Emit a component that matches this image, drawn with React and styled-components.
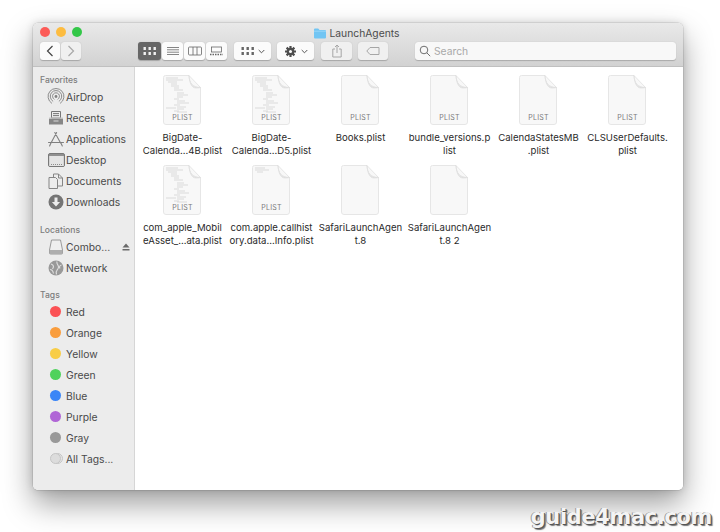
import React from 'react'
import styled, { createGlobalStyle } from 'styled-components'

const Global = createGlobalStyle`
  html, body { margin: 0; padding: 0; background: #ffffff; }
  body { width: 720px; height: 532px; overflow: hidden; font-family: "Inter", "Liberation Sans", sans-serif; }
`

const Page = styled.div`
  position: relative;
  width: 720px;
  height: 532px;
  padding: 23px 37px 0 33px;
  box-sizing: border-box;
  overflow: hidden;
`

const Window = styled.div`
  height: 467px;
  border-radius: 5px;
  overflow: hidden;
  display: flex;
  flex-direction: column;
  background: #fff;
  box-shadow: 0 14px 30px rgba(0,0,0,.38), 0 0 8px rgba(0,0,0,.14), 0 0 0 .5px rgba(0,0,0,.16);
`

const TitleBar = styled.div`
  height: 44px;
  flex: none;
  box-sizing: border-box;
  padding: 1px 7px 0;
  background: linear-gradient(#e9e9e9, #d2d2d2);
  border-bottom: 1px solid #c0c0c0;
  display: flex;
  flex-direction: column;
`

const TopRow = styled.div`
  position: relative;
  height: 17px;
  display: flex;
  align-items: center;
  justify-content: center;
  gap: 3px;
  font-size: 10.3px;
  color: #4c4c4c;
  padding-right: 4px;
`

const Lights = styled.div`
  position: absolute;
  left: 0;
  top: 3px;
  display: flex;
  gap: 6px;
`

const Light = styled.span`
  width: 10px;
  height: 10px;
  border-radius: 50%;
  background: ${p => p.$c};
`

const ToolRow = styled.div`
  display: flex;
  align-items: center;
  height: 18px;
  margin-top: 1px;
`

const Group = styled.div`
  display: flex;
  gap: 1px;
  margin-left: ${p => p.$ml || 0}px;
`

const Btn = styled.div`
  width: ${p => p.$w || 23}px;
  height: 18px;
  display: flex;
  align-items: center;
  justify-content: center;
  gap: 4px;
  border-radius: 3px;
  background: ${p => p.$active ? '#676767' : p.$dim ? '#f0f0f0' : '#fbfbfb'};
  box-shadow: 0 .5px 1px rgba(0,0,0,.22);
`

const SearchBox = styled.div`
  width: 261px;
  height: 18px;
  margin-left: 27px;
  border-radius: 3px;
  background: #f8f8f8;
  box-shadow: 0 .5px 1px rgba(0,0,0,.2);
  display: flex;
  align-items: center;
  gap: 3px;
  padding-left: 4px;
  box-sizing: border-box;
  font-size: 10.3px;
  color: #a9a9a9;
`

const Body = styled.div`
  flex: 1;
  display: flex;
  min-height: 0;
`

const Sidebar = styled.div`
  width: 102px;
  flex: none;
  box-sizing: border-box;
  background: #ececec;
  border-right: 1px solid #d6d6d6;
  padding-top: 7px;
`

const Heading = styled.div`
  height: 12px;
  line-height: 12px;
  font-size: 8.6px;
  font-weight: 500;
  color: #7d7d7d;
  padding-left: 7px;
  margin-top: ${p => p.$mt || 0}px;
`

const Item = styled.div`
  height: 21px;
  display: flex;
  align-items: center;
  font-size: 10.3px;
  color: #4a4a4a;
  white-space: nowrap;
`

const IconSlot = styled.span`
  width: 18px;
  height: 18px;
  margin-left: 14px;
  margin-right: 1px;
  display: flex;
  align-items: center;
  justify-content: center;
  flex: none;
`

const Dot = styled.span`
  width: 11px;
  height: 11px;
  margin-left: -2px;
  border-radius: 50%;
  background: ${p => p.$c};
`

const Eject = styled.span`
  margin-left: 12px;
  display: flex;
`

const Files = styled.div`
  flex: 1;
  display: grid;
  grid-template-columns: repeat(6, 89px);
  grid-auto-rows: 90px;
  padding: 8px 0 0 3px;
  background: #fff;
`

const FileCell = styled.div`
  display: flex;
  flex-direction: column;
  align-items: center;
`

const FileIcon = styled.div`
  position: relative;
  width: 38px;
  height: 50px;
  margin-left: -1px;
`

const IconLabel = styled.span`
  position: absolute;
  left: 1px;
  right: 0;
  bottom: 3px;
  text-align: center;
  font-size: 7px;
  letter-spacing: .2px;
  color: #7a7a7a;
`

const FileName = styled.div`
  width: 87px;
  margin-top: 6px;
  font-size: 9.6px;
  line-height: 13px;
  text-align: center;
  color: #2a2a2a;
  white-space: pre;
`

const Watermark = styled.div`
  position: absolute;
  right: 8px;
  bottom: 0;
  font-family: "DejaVu Sans", sans-serif;
  font-weight: 700;
  font-size: 20.8px;
  line-height: 30px;
  letter-spacing: -.25px;
  color: #f4f4f4;
  text-shadow: 1px 1px 0 #555, 2px 2px 1px #777, -1px 0 0 #999;
`

const Sv = ({ w = 16, h = 16, children }) => (
  <svg width={w} height={h} viewBox={`0 0 ${w} ${h}`} fill="none">{children}</svg>
)

const Folder = () => (
  <Sv w={14} h={12}>
    <path d="M1 2.500A1 1 0 0 1 2 1.500h3.200l1.300 1.500H12a1 1 0 0 1 1 1v6.500a1 1 0 0 1-1 1H2a1 1 0 0 1-1-1z" fill="#71c5f3" />
    <path d="M1 4.200h12" stroke="#a4dcf9" strokeWidth=".8" />
  </Sv>
)

const IconGridGlyph = ({ c = '#666' }) => (
  <Sv w={13} h={10}>
    {[0, 5, 10].map(x => [1, 6].map(y => (
      <rect key={`${x}-${y}`} x={x + .5} y={y} width="2.400" height="3" fill={c} />
    )))}
  </Sv>
)

const ListGlyph = () => (
  <Sv w={12} h={10}>
    <path d="M0 1.500h12M0 3.800h12M0 6.200h12M0 8.500h12" stroke="#666" strokeWidth=".8" />
  </Sv>
)

const ColumnGlyph = () => (
  <Sv w={14} h={10}>
    <rect x=".5" y="1" width="13" height="8" rx="1" stroke="#666" strokeWidth=".8" />
    <path d="M5 1v8M9 1v8" stroke="#666" strokeWidth=".8" />
  </Sv>
)

const GalleryGlyph = () => (
  <Sv w={13} h={10}>
    <rect x="1.500" y="1" width="10" height="5" stroke="#666" strokeWidth=".8" />
    <path d="M0 8.500h13" stroke="#666" strokeDasharray="1.500 1" strokeWidth="1.300" />
  </Sv>
)

const Chevron = () => (
  <Sv w={7} h={5}>
    <path d="M.7 1 3.500 3.800 6.300 1" stroke="#555" strokeWidth="1" />
  </Sv>
)

const GearGlyph = () => (
  <Sv w={13} h={13}>
    <g stroke="#4d4d4d" strokeWidth="2.200">
      <path d="M6.500 1v11M1 6.500h11M2.600 2.600l7.800 7.800M10.400 2.600l-7.800 7.800" />
    </g>
    <circle cx="6.500" cy="6.500" r="3.800" fill="#4d4d4d" />
    <circle cx="6.500" cy="6.500" r="1.500" fill="#fbfbfb" />
  </Sv>
)

const ShareGlyph = () => (
  <Sv w={10} h={14}>
    <path d="M3 5H.8v8h8.400V5H7" stroke="#a6a6a6" />
    <path d="M5 9V1M3 3 5 1l2 2" stroke="#a6a6a6" />
  </Sv>
)

const TagGlyph = () => (
  <Sv w={14} h={8}>
    <path d="M4 .5h9v7H4L.8 4z" stroke="#a6a6a6" />
  </Sv>
)

const SearchGlyph = () => (
  <Sv w={12} h={12}>
    <circle cx="5" cy="5" r="3.800" stroke="#6f6f6f" />
    <path d="m7.800 7.800 3.400 3.400" stroke="#6f6f6f" />
  </Sv>
)

const AirDropIcon = () => (
  <Sv w={18} h={18}>
    <g stroke="#808080" strokeWidth=".9" strokeLinecap="round">
      <path d="M4.600 15.200a8 8 0 1 1 8.800 0" />
      <path d="M5.800 13.200a5.800 5.800 0 1 1 6.400 0" />
      <path d="M7 11.200a3.500 3.500 0 1 1 4 0" />
    </g>
    <circle cx="9" cy="8.500" r="1.400" fill="#808080" />
  </Sv>
)

const RecentsIcon = () => (
  <Sv w={16} h={16}>
    <path d="M3.500 1.500h9V8h-9z" stroke="#777" />
    <path d="M5 3.600h6M5 5.600h6" stroke="#777" />
    <path d="M1 8.500h14v6H1z" fill="#868686" />
    <path d="M1 8h14" stroke="#c9c9c9" />
    <path d="M5.500 11h5" stroke="#d8d8d8" />
  </Sv>
)

const AppsIcon = () => (
  <Sv w={18} h={16}>
    <path d="M9.600 1.500 4 12M7.800 1.500 13.600 12M1.500 11.500h15M3.800 12.200 2.600 15M14 12.200l1.300 2.800" stroke="#808080" strokeWidth="1.100" strokeLinecap="round" />
  </Sv>
)

const DesktopIcon = () => (
  <Sv w={17} h={14}>
    <rect x=".5" y=".5" width="16" height="13" rx="1.500" fill="#909090" stroke="#787878" />
    <rect x="1.200" y="3" width="14.600" height="10" fill="#e4e4e4" />
    <path d="M3 11.500h11" stroke="#8c8c8c" strokeDasharray="1 1" />
  </Sv>
)

const DocumentsIcon = () => (
  <Sv w={16} h={16}>
    <path d="M5.500 1h5l4 4v8h-9z" fill="#ececec" stroke="#858585" />
    <path d="M10.500 1v4h4" stroke="#858585" />
    <path d="M1 4.500h6.500l2 2v9H1z" fill="#ececec" stroke="#858585" />
  </Sv>
)

const DownloadsIcon = () => (
  <Sv w={16} h={16}>
    <circle cx="8" cy="8" r="7.500" fill="#757575" />
    <path d="M6.500 3.500h3v4.500h2.600L8 12.400 3.900 8h2.600z" fill="#ececec" />
  </Sv>
)

const DriveIcon = () => (
  <Sv w={14} h={16}>
    <path d="M2.500 1h9l2 10v3a1 1 0 0 1-1 1h-11a1 1 0 0 1-1-1v-3z" fill="#efefef" stroke="#9a9a9a" />
    <path d="M.6 11h12.800v3.200a.8.8 0 0 1-.8.8H1.400a.8.8 0 0 1-.8-.8z" fill="#aeaeae" />
  </Sv>
)

const NetworkIcon = () => (
  <Sv w={16} h={16}>
    <circle cx="8" cy="8" r="7.500" fill="#999" />
    <path d="M3 4c3 1 3 3 1.500 5M9 1.500c-1 3 2 3 1.500 6S7 10 8.500 14.500M13.500 5c-2 .5-2.500 2-1.500 3.500M2 9.500c2 0 3 1.500 3.500 4" stroke="#dcdcdc" strokeWidth="1.200" />
  </Sv>
)

const AllTagsIcon = () => (
  <Sv w={13} h={11}>
    <circle cx="7.500" cy="5.500" r="5" fill="#e6e6e6" stroke="#c4c4c4" />
    <circle cx="5.500" cy="5.500" r="5" fill="#dcdcdc" stroke="#c4c4c4" />
  </Sv>
)

const EjectIcon = () => (
  <Sv w={8} h={8}>
    <path d="M4 .5 7.500 4.500h-7zM.5 6h7v1.500h-7z" fill="#6a6a6a" />
  </Sv>
)

// tiny grey scribble lines of a plist preview, [x, y, width]
const denseLines = [
  [3, 3, 12], [3, 5, 17], [5, 7, 9], [8, 9, 6], [8, 11, 8], [11, 13, 5], [11, 15, 9], [14, 18, 7], [14, 20, 11],
  [14, 22, 6], [11, 24, 5], [14, 26, 8], [14, 28, 12], [11, 30, 6], [14, 32, 9], [3, 33, 10], [14, 34, 7], [11, 36, 5], [14, 37, 10]
]
const sparseLines = [[3, 3, 10], [3, 5, 14], [5, 7, 6]]

const PageIcon = ({ lines, label }) => (
  <FileIcon>
    <svg width="38" height="50" viewBox="0 0 38 50" fill="none">
      <path d="M2.500 .5H26L37.500 12.500V47a2.500 2.500 0 0 1-2.500 2.500H3a2.500 2.500 0 0 1-2.500-2.500V2.500a2 2 0 0 1 2-2z" fill="#f8f8f8" stroke="#e6e6e6" />
      <path d="M26 .5C26.500 8 29 12 37.500 12.500C31 14 27 13 26 .5z" fill="#e6e6e6" stroke="#dcdcdc" strokeWidth=".6" />
      {lines && lines.map(([x, y, w]) => (
        <path key={`${x}-${y}`} d={`M${x} ${y}h${w}`} stroke="#c6c6c6" strokeWidth=".6" />
      ))}
    </svg>
    {label && <IconLabel>PLIST</IconLabel>}
  </FileIcon>
)

const files = [
  { name: 'BigDate-\nCalenda...4B.plist', lines: denseLines, label: true },
  { name: 'BigDate-\nCalenda...D5.plist', lines: denseLines, label: true },
  { name: 'Books.plist', lines: null, label: true },
  { name: 'bundle_versions.p\nlist', lines: null, label: true },
  { name: 'CalendaStatesMB\n.plist', lines: null, label: true },
  { name: 'CLSUserDefaults.\nplist', lines: null, label: true },
  { name: 'com_apple_Mobil\neAsset_...ata.plist', lines: denseLines, label: true },
  { name: 'com.apple.callhist\nory.data...Info.plist', lines: sparseLines, label: true },
  { name: 'SafariLaunchAgen\nt.8', lines: null, label: false },
  { name: 'SafariLaunchAgen\nt.8 2', lines: null, label: false }
]

const favorites = [
  ['AirDrop', <AirDropIcon />],
  ['Recents', <RecentsIcon />],
  ['Applications', <AppsIcon />],
  ['Desktop', <DesktopIcon />],
  ['Documents', <DocumentsIcon />],
  ['Downloads', <DownloadsIcon />]
]

const tags = [
  ['Red', '#fb5255'],
  ['Orange', '#f99d3d'],
  ['Yellow', '#f8cd47'],
  ['Green', '#4fd25c'],
  ['Blue', '#3b86f7'],
  ['Purple', '#b066d6'],
  ['Gray', '#999999']
]

export default function App() {
  return (
    <>
      <Global />
      <Page>
        <Window>
          <TitleBar>
            <TopRow>
              <Lights>
                <Light $c="#fc5b57" />
                <Light $c="#fdbc40" />
                <Light $c="#33c748" />
              </Lights>
              <Folder />
              LaunchAgents
            </TopRow>
            <ToolRow>
              <Group>
                <Btn $w={20}>
                  <Sv w={8} h={12}><path d="M6.500 1 1.500 6l5 5" stroke="#444" strokeWidth="1.200" /></Sv>
                </Btn>
                <Btn $w={20} $dim>
                  <Sv w={8} h={12}><path d="M1.500 1l5 5-5 5" stroke="#a8a8a8" strokeWidth="1.200" /></Sv>
                </Btn>
              </Group>
              <Group $ml={57}>
                <Btn $active $w={23}><IconGridGlyph c="#f2f2f2" /></Btn>
                <Btn $w={21}><ListGlyph /></Btn>
                <Btn $w={21}><ColumnGlyph /></Btn>
                <Btn $w={21}><GalleryGlyph /></Btn>
              </Group>
              <Group $ml={7}>
                <Btn $w={37}><IconGridGlyph /><Chevron /></Btn>
              </Group>
              <Group $ml={6}>
                <Btn $w={37}><GearGlyph /><Chevron /></Btn>
              </Group>
              <Group $ml={7}>
                <Btn $w={31} $dim><ShareGlyph /></Btn>
              </Group>
              <Group $ml={6}>
                <Btn $w={30} $dim><TagGlyph /></Btn>
              </Group>
              <SearchBox><SearchGlyph />Search</SearchBox>
            </ToolRow>
          </TitleBar>
          <Body>
            <Sidebar>
              <Heading>Favorites</Heading>
              {favorites.map(([name, icon]) => (
                <Item key={name}><IconSlot>{icon}</IconSlot>{name}</Item>
              ))}
              <Heading $mt={12}>Locations</Heading>
              <Item>
                <IconSlot><DriveIcon /></IconSlot>Combo...
                <Eject><EjectIcon /></Eject>
              </Item>
              <Item><IconSlot><NetworkIcon /></IconSlot>Network</Item>
              <Heading $mt={11}>Tags</Heading>
              {tags.map(([name, c]) => (
                <Item key={name}><IconSlot><Dot $c={c} /></IconSlot>{name}</Item>
              ))}
              <Item><IconSlot><AllTagsIcon /></IconSlot>All Tags...</Item>
            </Sidebar>
            <Files>
              {files.map(f => (
                <FileCell key={f.name}>
                  <PageIcon lines={f.lines} label={f.label} />
                  <FileName>{f.name}</FileName>
                </FileCell>
              ))}
            </Files>
          </Body>
        </Window>
        <Watermark>guide4mac.com</Watermark>
      </Page>
    </>
  )
}
